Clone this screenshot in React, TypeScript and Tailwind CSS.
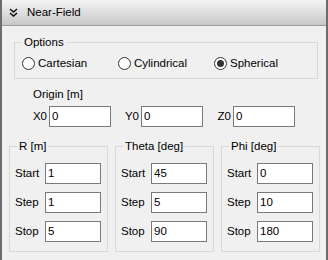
const font = { fontFamily: '"Liberation Sans", Arial, sans-serif' };

const Radio = ({ label, checked }: { label: string; checked?: boolean }) => (
  <div className="flex items-center h-[14px]">
    <span className="flex items-center justify-center w-[13px] h-[13px] rounded-full border border-[#333333] bg-white">
      {checked && <span className="w-[7px] h-[7px] rounded-full bg-[#333333]" />}
    </span>
    <span className="ml-[3px] leading-[14px]">{label}</span>
  </div>
);

const Field = ({ value, w }: { value: string; w: string }) => (
  <div className={`h-[21px] ${w} border border-[#7a7a7a] bg-white px-[2px] leading-[19px] text-black`}>
    {value}
  </div>
);

const RangeBox = ({ title, start, step, stop }: { title: string; start: string; step: string; stop: string }) => (
  <fieldset className="w-[99px] border border-[#d8d8d8] pb-[9px] pl-[5px]">
    <legend className="ml-[2px] px-[2px] leading-[15px]">{title}</legend>
    <div className="mt-[9px] flex flex-col gap-[8px]">
      {[
        ["Start", start],
        ["Step", step],
        ["Stop", stop],
      ].map(([l, v]) => (
        <div key={l} className="flex items-center">
          <span className="w-[30px]">{l}</span>
          <Field value={v} w="w-[56px]" />
        </div>
      ))}
    </div>
  </fieldset>
);

export default function App() {
  return (
    <div
      className="w-[328px] h-[260px] overflow-hidden border-x-2 border-[#6c6c6c] bg-[#f0f0f0] text-[11.5px] text-black"
      style={font}
    >
      <div className="flex items-center h-[26px] border-b border-[#9c9c9c] bg-linear-to-b from-[#f4f4f4] to-[#c8c8c8]">
        <svg className="ml-[7px]" width="9" height="9" viewBox="0 0 9 9" fill="none" stroke="#111" strokeWidth="1.6">
          <path d="M1 1 L4.5 4 L8 1" />
          <path d="M1 5 L4.5 8 L8 5" />
        </svg>
        <span className="ml-[9px]">Near-Field</span>
      </div>

      <fieldset className="ml-[12px] mt-[9px] w-[300px] border border-[#d8d8d8] px-[7px] pb-[8px]">
        <legend className="px-[2px] leading-[15px]">Options</legend>
        <div className="mt-[6px] grid grid-cols-[96px_96px_96px]">
          <Radio label="Cartesian" />
          <Radio label="Cylindrical" />
          <Radio label="Spherical" checked />
        </div>
      </fieldset>

      <div className="ml-[31px] mt-[8px] leading-[15px]">Origin [m]</div>

      <div className="mt-[4px] ml-[19px] flex">
        {[
          ["X0", "0"],
          ["Y0", "0"],
          ["Z0", "0"],
        ].map(([l, v]) => (
          <div key={l} className="flex items-center w-[92px]">
            <span className="w-[28px] pr-[2px] text-right">{l}</span>
            <Field value={v} w="w-[62px]" />
          </div>
        ))}
      </div>

      <div className="mt-[12px] ml-[7px] flex gap-[7px]">
        <RangeBox title="R [m]" start="1" step="1" stop="5" />
        <RangeBox title="Theta [deg]" start="45" step="5" stop="90" />
        <RangeBox title="Phi [deg]" start="0" step="10" stop="180" />
      </div>
    </div>
  );
}
